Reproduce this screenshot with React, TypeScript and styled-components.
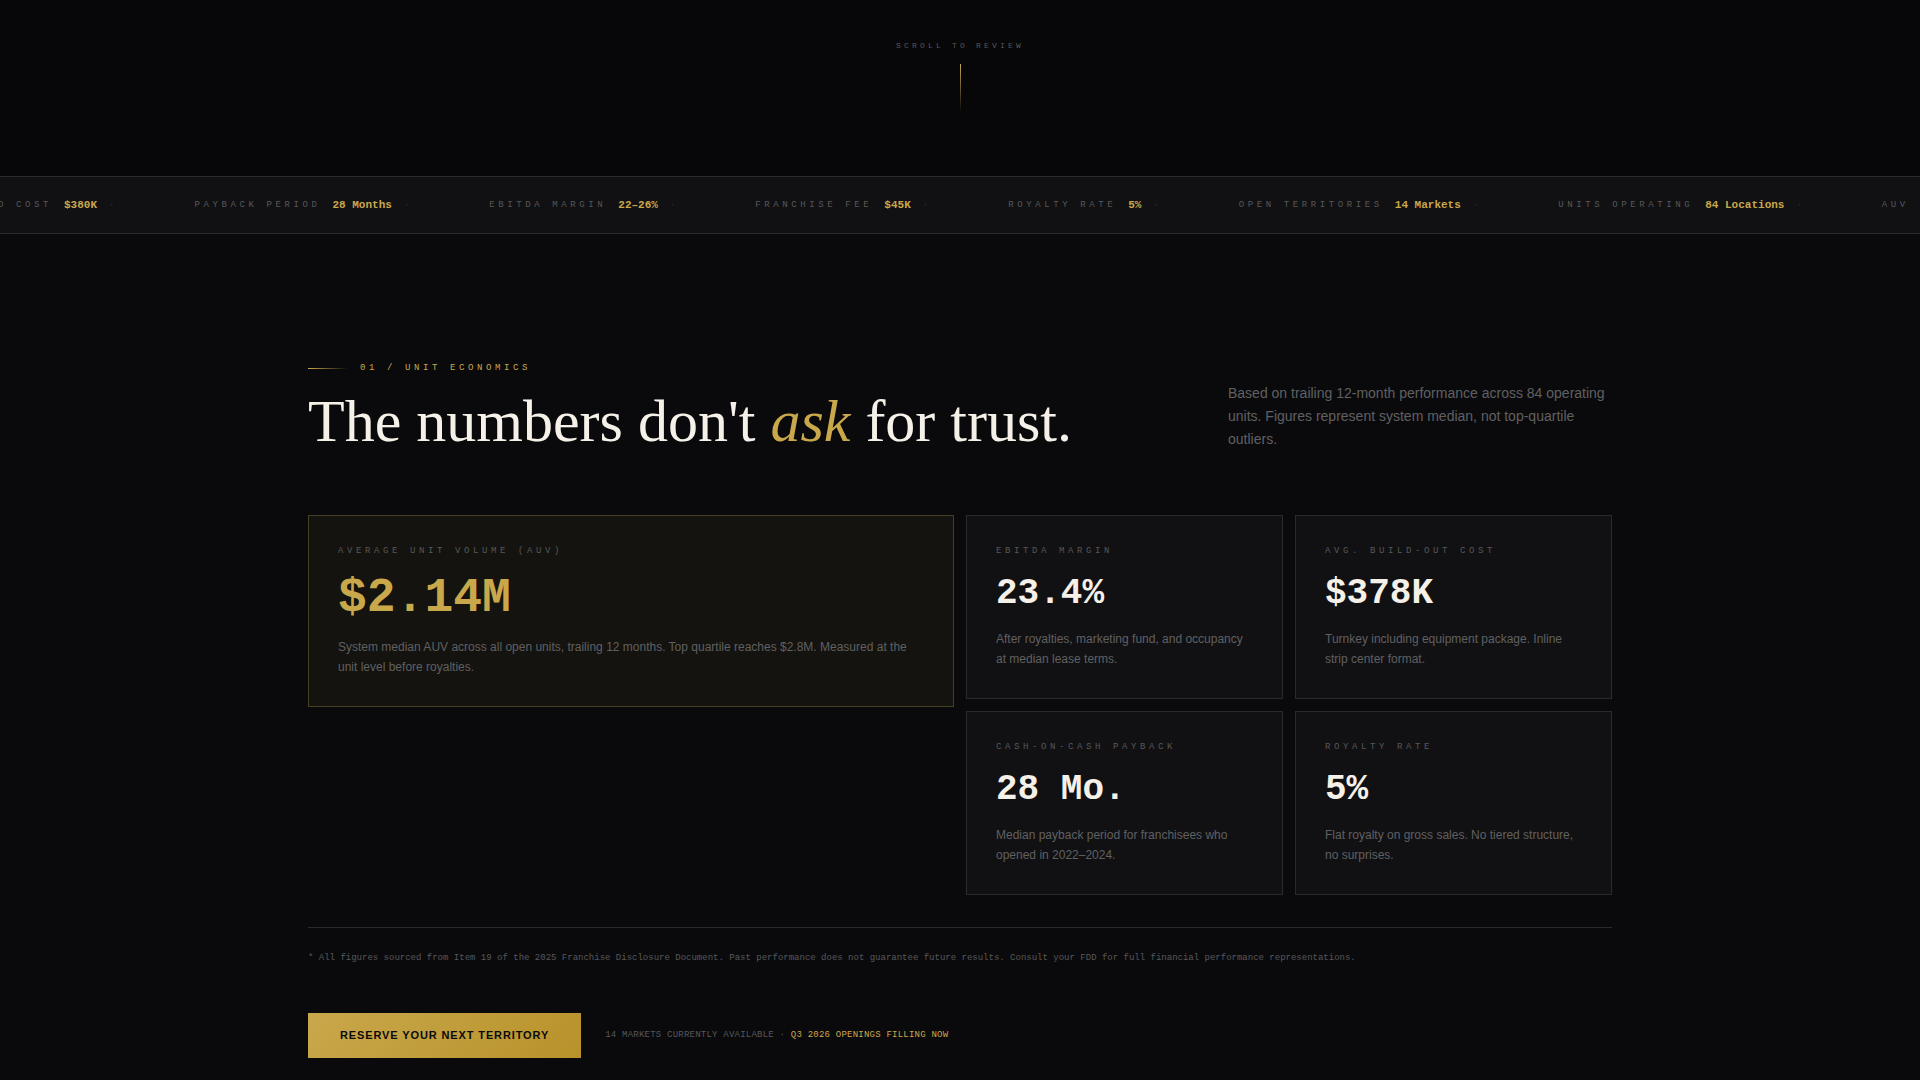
import React from "react";
import styled, { createGlobalStyle } from "styled-components";

const color = {
  ink: "#0a0a0c",
  inkDeep: "#070709",
  panel: "#111113",
  line: "#2a2a2d",
  dot: "#343437",
  muted: "#606062",
  faint: "#58585a",
  gold: "#c9a84c",
  goldDeep: "#b8922a",
  cream: "#f5f0e8",
};

const mono = `"Liberation Mono", monospace`;
const sans = `"Liberation Sans", sans-serif`;
const serif = `"Liberation Serif", serif`;

const GlobalStyle = createGlobalStyle`
  *, *::before, *::after { box-sizing: border-box; }
  body {
    margin: 0;
    background: ${color.ink};
    color: ${color.cream};
    font-family: ${sans};
  }
  h2, p, dl, dt, dd { margin: 0; }
`;

const HeroFoot = styled.div`
  display: flex;
  flex-direction: column;
  align-items: center;
  gap: 12px;
  padding: 40px 0 64px;
  background: ${color.inkDeep};
`;

const ScrollCue = styled.span`
  font: 8px/12px ${mono};
  letter-spacing: 0.4em;
  text-transform: uppercase;
  color: ${color.faint};
`;

const ScrollLine = styled.div`
  width: 1px;
  height: 48px;
  background: linear-gradient(to bottom, ${color.gold}, transparent);
`;

const Ticker = styled.div`
  overflow: hidden;
  border-top: 1px solid ${color.line};
  border-bottom: 1px solid ${color.line};
  background: ${color.panel};
`;

const TickerTrack = styled.div`
  display: flex;
  width: max-content;
  margin-left: -78px;
  padding: 20px 0;
`;

const TickerItem = styled.div`
  display: flex;
  align-items: center;
  gap: 12px;
  padding: 0 40px;
  font: 9px/16px ${mono};
  white-space: nowrap;
`;

const TickerLabel = styled.span`
  letter-spacing: 0.4em;
  text-transform: uppercase;
  color: ${color.faint};
`;

const TickerValue = styled.span`
  font-size: 11px;
  font-weight: 700;
  color: ${color.gold};
`;

const TickerDot = styled.span`
  color: ${color.dot};
`;

const Section = styled.section`
  max-width: 1400px;
  margin: 0 auto;
  padding: 128px 48px 22px;
`;

const Header = styled.header`
  display: flex;
  align-items: flex-end;
  justify-content: space-between;
  gap: 64px;
  margin-bottom: 64px;
`;

const Eyebrow = styled.p`
  display: flex;
  align-items: center;
  gap: 12px;
  margin-bottom: 16px;
  font: 9px/13px ${mono};
  letter-spacing: 0.4em;
  text-transform: uppercase;
  color: ${color.gold};

  &::before {
    content: "";
    width: 40px;
    height: 1px;
    background: linear-gradient(to right, ${color.gold}, transparent);
  }
`;

const Title = styled.h2`
  font: 400 60px/60px ${serif};

  em {
    color: ${color.gold};
  }
`;

const Intro = styled.p`
  flex: 0 1 384px;
  font-size: 14px;
  line-height: 23px;
  color: ${color.muted};
`;

const Metrics = styled.dl`
  display: grid;
  grid-template-columns: repeat(4, 1fr);
  align-items: start;
  gap: 12px;
`;

const Card = styled.div<{ $featured?: boolean }>`
  grid-column: span ${(p) => (p.$featured ? 2 : 1)};
  grid-row: span ${(p) => (p.$featured ? 2 : 1)};
  padding: 28px 29px 29px;
  border: 1px solid ${(p) => (p.$featured ? "#45401f" : color.line)};
  background: ${(p) => (p.$featured ? "#14130f" : color.panel)};
`;

const CardLabel = styled.dt`
  margin-bottom: 16px;
  font: 9px/14px ${mono};
  letter-spacing: 0.4em;
  text-transform: uppercase;
  color: ${color.faint};
`;

const CardValue = styled.dd<{ $featured?: boolean }>`
  margin-bottom: 15px;
  font: 700 ${(p) => (p.$featured ? "48px/48px" : "36px/40px")} ${mono};
  color: ${(p) => (p.$featured ? color.gold : color.cream)};
`;

const CardNote = styled.dd`
  font-size: 12px;
  line-height: 20px;
  color: ${color.muted};
`;

const Footnote = styled.p`
  margin: 32px 0 48px;
  padding-top: 24px;
  border-top: 1px solid ${color.line};
  font: 9px/13px ${mono};
  color: ${color.faint};
`;

const Actions = styled.div`
  display: flex;
  align-items: center;
  gap: 24px;
`;

const ReserveButton = styled.button`
  padding: 16px 32px;
  border: 0;
  background: linear-gradient(135deg, ${color.gold}, ${color.goldDeep});
  color: ${color.ink};
  font: 700 11px/13px ${sans};
  letter-spacing: 0.08em;
  text-transform: uppercase;
  cursor: pointer;
`;

const Availability = styled.p`
  font: 9px/13px ${mono};
  letter-spacing: 0.025em;
  text-transform: uppercase;
  color: ${color.faint};

  strong {
    font-weight: 400;
    color: ${color.gold};
  }
`;

const tickerItems = [
  ["Build Cost", "$380K"],
  ["Payback Period", "28 Months"],
  ["EBITDA Margin", "22–26%"],
  ["Franchise Fee", "$45K"],
  ["Royalty Rate", "5%"],
  ["Open Territories", "14 Markets"],
  ["Units Operating", "84 Locations"],
  ["AUV", "$2.14M"],
];

const metrics = [
  {
    label: "Average Unit Volume (AUV)",
    value: "$2.14M",
    note: "System median AUV across all open units, trailing 12 months. Top quartile reaches $2.8M. Measured at the unit level before royalties.",
    featured: true,
  },
  {
    label: "EBITDA Margin",
    value: "23.4%",
    note: "After royalties, marketing fund, and occupancy at median lease terms.",
  },
  {
    label: "Avg. Build-Out Cost",
    value: "$378K",
    note: "Turnkey including equipment package. Inline strip center format.",
  },
  {
    label: "Cash-on-Cash Payback",
    value: "28 Mo.",
    note: "Median payback period for franchisees who opened in 2022–2024.",
  },
  {
    label: "Royalty Rate",
    value: "5%",
    note: "Flat royalty on gross sales. No tiered structure, no surprises.",
  },
];

export default function App() {
  return (
    <>
      <GlobalStyle />
      <HeroFoot>
        <ScrollCue>Scroll to review</ScrollCue>
        <ScrollLine />
      </HeroFoot>

      <Ticker>
        <TickerTrack>
          {tickerItems.map(([label, value]) => (
            <TickerItem key={label}>
              <TickerLabel>{label}</TickerLabel>
              <TickerValue>{value}</TickerValue>
              <TickerDot>·</TickerDot>
            </TickerItem>
          ))}
        </TickerTrack>
      </Ticker>

      <Section>
        <Header>
          <div>
            <Eyebrow>01 / Unit Economics</Eyebrow>
            <Title>
              The numbers don't <em>ask</em> for trust.
            </Title>
          </div>
          <Intro>
            Based on trailing 12-month performance across 84 operating units.
            Figures represent system median, not top-quartile outliers.
          </Intro>
        </Header>

        <Metrics>
          {metrics.map((m) => (
            <Card key={m.label} $featured={m.featured}>
              <CardLabel>{m.label}</CardLabel>
              <CardValue $featured={m.featured}>{m.value}</CardValue>
              <CardNote>{m.note}</CardNote>
            </Card>
          ))}
        </Metrics>

        <Footnote>
          * All figures sourced from Item 19 of the 2025 Franchise Disclosure
          Document. Past performance does not guarantee future results. Consult
          your FDD for full financial performance representations.
        </Footnote>

        <Actions>
          <ReserveButton type="button">Reserve your next territory</ReserveButton>
          <Availability>
            14 markets currently available ·{" "}
            <strong>Q3 2026 openings filling now</strong>
          </Availability>
        </Actions>
      </Section>
    </>
  );
}
